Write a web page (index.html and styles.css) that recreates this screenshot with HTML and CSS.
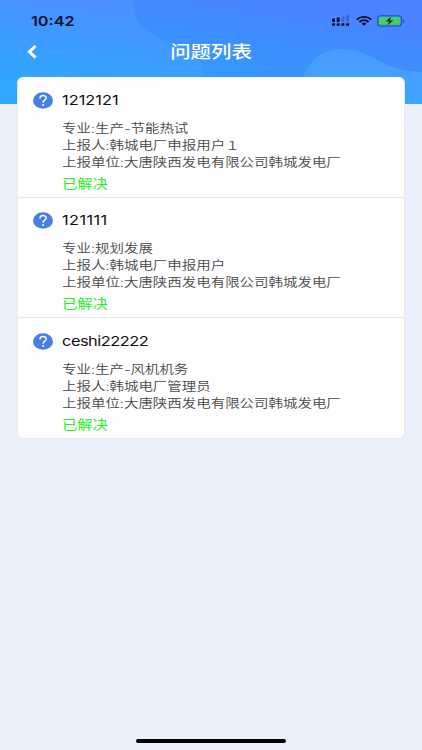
FILE: index.html
```html
<!DOCTYPE html>
<html lang="zh-CN">
<head>
    <meta charset="UTF-8">
    <meta name="viewport" content="width=device-width, initial-scale=1.0">
    <title>问题列表</title>
    <link rel="stylesheet" href="styles.css">
</head>
<body>
    <header class="header">
        <svg class="header-bg" viewBox="0 0 422 104" preserveAspectRatio="none">
            <defs>
                <linearGradient id="sky" gradientUnits="userSpaceOnUse" x1="220" y1="-8" x2="205" y2="104">
                    <stop offset="0" stop-color="#548aff"/>
                    <stop offset="1" stop-color="#30a6ff"/>
                </linearGradient>
                <linearGradient id="blob" gradientUnits="userSpaceOnUse" x1="290" y1="0" x2="275" y2="90">
                    <stop offset="0" stop-color="#4a82ff"/>
                    <stop offset="1" stop-color="#329aff"/>
                </linearGradient>
                <linearGradient id="wave" x1="0" y1="0" x2="0" y2="1">
                    <stop offset="0" stop-color="#4d9aff"/>
                    <stop offset="1" stop-color="#3da6ff"/>
                </linearGradient>
            </defs>
            <rect width="422" height="104" fill="url(#sky)"/>
            <path d="M134 0C132 20 146 34 168 42C190 50 203 58 204 78V104H422V0Z" fill="url(#blob)"/>
            <path d="M300 104C298 70 316 49 341 49C373 49 380 71 422 72V104Z" fill="url(#wave)"/>
        </svg>

        <div class="status-bar">
            <span class="time">10:42</span>
            <div class="status-icons">
                <svg width="18" height="12" viewBox="0 0 18 12">
                    <g fill="#06102c">
                        <rect x="0" y="3.5" width="3" height="3.4" rx=".6"/>
                        <rect x="4.7" y="2.5" width="3" height="4.4" rx=".6"/>
                        <rect x="0" y="8.2" width="3" height="2.6" rx=".6"/>
                        <rect x="4.7" y="8.2" width="3" height="2.6" rx=".6"/>
                        <rect x="9.4" y="8.2" width="3" height="2.6" rx=".6"/>
                        <rect x="14.1" y="8.2" width="3" height="2.6" rx=".6"/>
                    </g>
                    <g fill="#3b6ad4">
                        <rect x="9.4" y="1.4" width="3" height="5.5" rx=".6"/>
                        <rect x="14.1" y=".2" width="3" height="6.7" rx=".6"/>
                    </g>
                </svg>
                <svg class="wifi" width="16" height="10" viewBox="0 0 16 10" fill="none" stroke="#06102c" stroke-width="1.9">
                    <path d="M.7 3.6C4.8 0 11.2 0 15.3 3.6"/>
                    <path d="M3.4 6C6.1 3.7 9.9 3.7 12.6 6"/>
                    <path d="M5.6 7.4Q8 5.8 10.4 7.4L8 9.8Z" fill="#06102c" stroke="none"/>
                </svg>
                <svg width="28" height="12" viewBox="0 0 28 12">
                    <rect x=".6" y=".8" width="24" height="10.2" rx="3" fill="none" stroke="#2952a4" stroke-width="1.1"/>
                    <rect x="2" y="2" width="21.2" height="7.8" rx="1.6" fill="#43cf62"/>
                    <path d="M25.9 4.1Q27.4 4.6 27.4 5.9T25.9 7.7Z" fill="#2952a4"/>
                    <path d="M14.4 1.2L8.6 6.6H12L10.4 10.6L16.5 5.2H13Z" fill="#06102c" stroke="#43cf62" stroke-width=".4"/>
                </svg>
            </div>
        </div>

        <div class="nav-bar">
            <svg class="back" width="10" height="14" viewBox="0 0 10 14" fill="none" stroke="#fff" stroke-width="3">
                <path d="M8.6 1L2.4 6.8L8.6 12.6"/>
            </svg>
            <h1 class="nav-title">问题列表</h1>
        </div>
    </header>

    <main class="list">
        <section class="item">
            <svg class="item-icon" viewBox="0 0 20 17" preserveAspectRatio="none">
                <ellipse cx="10" cy="8.5" rx="10" ry="8.3" fill="#487fe2"/>
                <path d="M6.9 6.4C6.9 2.6 13.2 2.6 13.2 6.1C13.2 8.2 10.1 8.2 10.1 10.7" fill="none" stroke="#fff" stroke-width="1.4"/>
                <ellipse cx="10.1" cy="13" rx="1" ry=".9" fill="#fff"/>
            </svg>
            <div class="item-body">
                <h2>1212121</h2>
                <p>专业:生产-节能热试</p>
                <p>上报人:韩城电厂申报用户１</p>
                <p>上报单位:大唐陕西发电有限公司韩城发电厂</p>
                <p class="status">已解决</p>
            </div>
        </section>

        <section class="item">
            <svg class="item-icon" viewBox="0 0 20 17" preserveAspectRatio="none">
                <ellipse cx="10" cy="8.5" rx="10" ry="8.3" fill="#487fe2"/>
                <path d="M6.9 6.4C6.9 2.6 13.2 2.6 13.2 6.1C13.2 8.2 10.1 8.2 10.1 10.7" fill="none" stroke="#fff" stroke-width="1.4"/>
                <ellipse cx="10.1" cy="13" rx="1" ry=".9" fill="#fff"/>
            </svg>
            <div class="item-body">
                <h2 class="loose">121111</h2>
                <p>专业:规划发展</p>
                <p>上报人:韩城电厂申报用户</p>
                <p>上报单位:大唐陕西发电有限公司韩城发电厂</p>
                <p class="status">已解决</p>
            </div>
        </section>

        <section class="item">
            <svg class="item-icon" viewBox="0 0 20 17" preserveAspectRatio="none">
                <ellipse cx="10" cy="8.5" rx="10" ry="8.3" fill="#487fe2"/>
                <path d="M6.9 6.4C6.9 2.6 13.2 2.6 13.2 6.1C13.2 8.2 10.1 8.2 10.1 10.7" fill="none" stroke="#fff" stroke-width="1.4"/>
                <ellipse cx="10.1" cy="13" rx="1" ry=".9" fill="#fff"/>
            </svg>
            <div class="item-body">
                <h2 class="tight">ceshi22222</h2>
                <p>专业:生产-风机机务</p>
                <p>上报人:韩城电厂管理员</p>
                <p>上报单位:大唐陕西发电有限公司韩城发电厂</p>
                <p class="status">已解决</p>
            </div>
        </section>
    </main>

    <div class="home-bar"></div>
</body>
</html>
```
FILE: styles.css
```css
* {
    box-sizing: border-box;
}

body {
    margin: 0;
    height: 750px;
    display: flex;
    flex-direction: column;
    background-color: #eaf1fc;
    font-family: Inter, "Noto Sans CJK SC", sans-serif;
    overflow: hidden;
}

h1, h2, p {
    margin: 0;
    font-weight: 400;
}

.header {
    position: relative;
    height: 104px;
    flex: none;
}

.header-bg {
    position: absolute;
    top: 0;
    left: 0;
    width: 100%;
    height: 104px;
}

.status-bar {
    position: relative;
    display: flex;
    justify-content: space-between;
    height: 32px;
    padding: 12px 17px 0 31px;
}

.time {
    font-size: 13.5px;
    line-height: 18px;
    font-weight: 600;
    color: #06102c;
    transform: scaleX(1.2);
    transform-origin: left;
}

.status-icons {
    display: flex;
    align-items: flex-start;
    padding-top: 3px;
}

.wifi {
    margin: 1px 5px 0 6px;
}

.nav-bar {
    position: relative;
    display: flex;
    align-items: center;
    justify-content: center;
    height: 40px;
}

.back {
    position: absolute;
    left: 27px;
    top: 13px;
}

.nav-title {
    font-size: 17px;
    line-height: 24px;
    font-weight: 500;
    color: #fff;
    transform: scaleX(1.2);
}

/* 问题列表 */
.list {
    position: relative;
    flex: none;
    margin: -27px 17px 0 17px;
    background-color: #fefefe;
    border: 1px solid #e4e9f2;
    border-top: none;
    border-radius: 6px;
}

.item {
    display: flex;
    height: 120px;
    padding: 12px 0 0 15px;
    border-bottom: 1px solid #e6e7e9;
}

.item:first-child {
    height: 121px;
    padding-top: 13px;
}

.item:last-child {
    padding-top: 13px;
    border-bottom: none;
}

.item-icon {
    flex: none;
    width: 20px;
    height: 17px;
    margin: 1.5px 9px 0 0;
}

/* 文字横向拉伸 */
.item-body {
    margin-left: -0.5px;
    transform: scaleX(1.205);
    transform-origin: left;
    white-space: nowrap;
}

.item-body h2 {
    font-size: 13.6px;
    line-height: 20px;
    margin-bottom: 10px;
    color: #111;
}

.item-body h2.loose {
    letter-spacing: 0.3px;
}

.item-body h2.tight {
    letter-spacing: -0.4px;
}

.item-body p {
    font-size: 12px;
    line-height: 17px;
    font-weight: 350;
    color: #4a4a4a;
}

.item-body .status {
    font-size: 12.7px;
    line-height: 18px;
    margin-top: 4px;
    font-weight: 400;
    color: #27f027;
}

.home-bar {
    width: 150px;
    height: 4px;
    margin: auto auto 7px;
    border-radius: 2px;
    background-color: #000;
}
```
